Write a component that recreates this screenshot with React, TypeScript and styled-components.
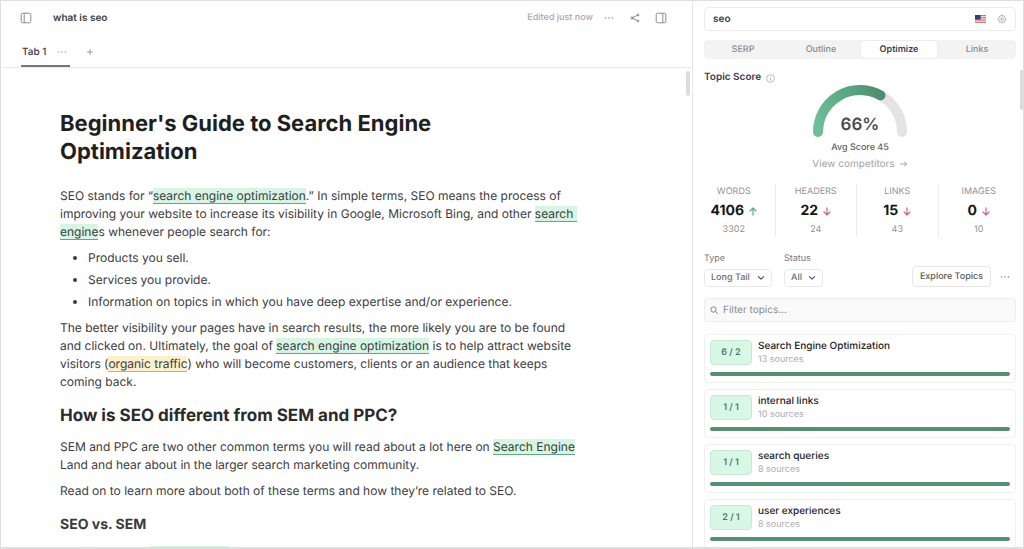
import React from "react";
import styled, { createGlobalStyle } from "styled-components";

const GlobalStyle = createGlobalStyle`
  *, *::before, *::after { box-sizing: border-box; }
  body {
    margin: 0;
    background: #fff;
    color: #3c3c3f;
    font-family: Inter, "Liberation Sans", sans-serif;
    text-rendering: geometricPrecision;
  }
  button, input, select { font-family: inherit; color: inherit; margin: 0; text-rendering: inherit; }
  button { cursor: pointer; }
  h1, h2, h3, p, ul, dl, dd, dt { margin: 0; padding: 0; }
`;

const Shell = styled.div`
  display: grid;
  grid-template-columns: minmax(0, 1fr) 331px;
  height: 100vh;
  border: 1px solid #dfdfdf;
  border-bottom-width: 2px;
  overflow: hidden;
`;

const EditorPane = styled.main`
  position: relative;
  display: flex;
  flex-direction: column;
  min-width: 0;
  min-height: 0;
`;

const Toolbar = styled.header`
  display: flex;
  align-items: center;
  height: 33px;
  padding: 0 25px 0 19px;
`;

const IconButton = styled.button`
  display: inline-flex;
  align-items: center;
  justify-content: center;
  flex: none;
  width: 12px;
  height: 12px;
  padding: 0;
  border: 0;
  background: none;
  color: ${(p) => p.color || "#8c8c8f"};
`;

const DocName = styled.span`
  margin-left: 21px;
  font-size: 10px;
  line-height: 16px;
  font-weight: 600;
`;

const ToolbarEnd = styled.div`
  display: flex;
  align-items: center;
  gap: 14px;
  margin-left: auto;
`;

const Edited = styled.span`
  margin-right: -4px;
  font-size: 9px;
  line-height: 16px;
  font-weight: 500;
  color: #a8a8ab;
`;

const TabRow = styled.nav`
  display: flex;
  align-items: stretch;
  gap: 14px;
  height: 34px;
  padding-left: 20px;
  border-bottom: 1px solid #e9e9ea;
`;

const DocTab = styled.div`
  display: flex;
  align-items: center;
  justify-content: space-between;
  width: 49px;
  padding: 4px 2px 0 1px;
  border-bottom: 2px solid #77777a;
`;

const DocTabButton = styled.button`
  padding: 0;
  border: 0;
  background: none;
  font-size: 10px;
  line-height: 16px;
  font-weight: 500;
`;

const AddTab = styled.div`
  display: flex;
  align-items: center;
  padding-top: 2px;
`;

const Article = styled.article`
  flex: 1;
  min-height: 0;
  overflow: hidden;
  padding: 42px 60px 0 59px;
  white-space: pre-wrap;

  > * { max-width: 520px; }
  > h1 { max-width: 500px; }
`;

const Title = styled.h1`
  font-size: 22px;
  line-height: 28px;
  font-weight: 700;
  color: #1f1f21;
`;

const Section = styled.h2`
  margin-top: 14px;
  font-size: 17px;
  line-height: 22px;
  font-weight: 700;
  color: #2b2b2d;
`;

const SubSection = styled.h3`
  margin-top: 16px;
  font-size: 14px;
  line-height: 18px;
  font-weight: 700;
  color: #3a3a3c;
`;

const Paragraph = styled.p<{ $space?: number }>`
  margin-top: ${(p) => p.$space ?? 8}px;
  font-size: 12px;
  line-height: 18px;
`;

const Bullets = styled.ul`
  margin-top: 8px;
  padding-left: 28px;
  font-size: 12px;
  line-height: 18px;
  white-space: normal;

  li + li { margin-top: 4px; }
`;

const Mark = styled.mark<{ $tone?: "green" | "amber" }>`
  color: inherit;
  background: ${(p) => (p.$tone === "amber" ? "#fdf0cb" : "#d6f5e3")};
  border-bottom: 1px solid ${(p) => (p.$tone === "amber" ? "#e0ab4c" : "#5cab82")};
`;

const ScrollThumb = styled.span<{ $top: number; $height: number; $right: number }>`
  position: absolute;
  top: ${(p) => p.$top}px;
  right: ${(p) => p.$right}px;
  width: 4px;
  height: ${(p) => p.$height}px;
  border-radius: 2px;
  background: #dcdcdd;
`;

const SidePane = styled.aside`
  position: relative;
  display: flex;
  flex-direction: column;
  min-height: 0;
  padding: 6px 7px 0 11px;
  border-left: 1px solid #e6e6e7;
  overflow: hidden;
`;

const QueryBox = styled.div`
  display: flex;
  flex: none;
  align-items: center;
  gap: 10px;
  height: 24px;
  padding: 0 7px 0 8px;
  border: 1px solid #ececed;
  border-radius: 4px;
`;

const QueryInput = styled.input`
  flex: 1;
  min-width: 0;
  padding: 0;
  border: 0;
  outline: 0;
  background: none;
  font-size: 10px;
  line-height: 16px;
  font-weight: 600;
`;

const Segments = styled.div`
  display: grid;
  flex: none;
  grid-template-columns: repeat(4, 1fr);
  height: 19px;
  margin-top: 9px;
  border-radius: 4px;
  background: #f3f3f4;
`;

const Segment = styled.button<{ $active?: boolean }>`
  padding: 0;
  border: ${(p) => (p.$active ? "1px solid #ececed" : "0")};
  border-radius: 4px;
  background: ${(p) => (p.$active ? "#fff" : "none")};
  font-size: 9px;
  line-height: 16px;
  font-weight: ${(p) => (p.$active ? 600 : 500)};
  color: ${(p) => (p.$active ? "#404042" : "#8a8a8e")};
`;

const ScoreHeading = styled.h2`
  display: flex;
  align-items: center;
  gap: 5px;
  height: 16px;
  margin-top: 10px;
  font-size: 10px;
  line-height: 16px;
  font-weight: 600;

  svg { margin-top: 3px; }
`;

const ScoreBlock = styled.div`
  display: flex;
  flex-direction: column;
  align-items: center;
`;

const Gauge = styled.div`
  display: grid;
  justify-items: center;
  align-items: end;

  > * { grid-area: 1 / 1; }
`;

const GaugeValue = styled.strong`
  font-size: 17px;
  line-height: 24px;
  font-weight: 600;
  color: #4c4c4f;
`;

const Average = styled.span`
  margin-top: 3px;
  font-size: 9px;
  line-height: 16px;
  font-weight: 500;
  color: #5e5e61;
`;

const Competitors = styled.a`
  display: inline-flex;
  align-items: center;
  gap: 4px;
  font-size: 10px;
  line-height: 16px;
  color: #a3a3a6;
  text-decoration: none;
`;

const Stats = styled.dl`
  display: grid;
  grid-template-columns: repeat(4, 1fr);
  margin: 12px -3px 0 -11px;
`;

const Stat = styled.div`
  display: flex;
  flex-direction: column;
  align-items: center;
  height: 53px;

  & + & { border-left: 1px solid #ececed; }
`;

const StatLabel = styled.dt`
  font-size: 9px;
  line-height: 16px;
  color: #929295;
`;

const StatValue = styled.dd`
  display: flex;
  align-items: center;
  gap: 5px;
  font-size: 14px;
  line-height: 22px;
  font-weight: 700;
  color: #161618;
`;

const StatTarget = styled.dd`
  font-size: 9px;
  line-height: 16px;
  color: #929295;
`;

const Filters = styled.div`
  display: flex;
  align-items: flex-end;
  gap: 12px;
  margin-top: 14px;
`;

const Field = styled.label`
  display: flex;
  flex-direction: column;
  gap: 2px;
  font-size: 9px;
  line-height: 16px;
  color: #77777a;
`;

const SelectBox = styled.span<{ $width: number }>`
  display: flex;
  align-items: center;
  justify-content: space-between;
  width: ${(p) => p.$width}px;
  height: 18px;
  padding: 0 6px;
  border: 1px solid #e9e9ea;
  border-radius: 4px;
  color: #6d6d70;
`;

const Select = styled.select`
  flex: 1;
  min-width: 0;
  padding: 0;
  border: 0;
  outline: 0;
  appearance: none;
  background: none;
  font-size: 9px;
  line-height: 16px;
  font-weight: 500;
`;

const FilterActions = styled.div`
  display: flex;
  align-items: center;
  gap: 8px;
  margin-left: auto;
  padding-right: 5px;
`;

const ExploreButton = styled.button`
  width: 79px;
  height: 21px;
  padding: 0;
  border: 1px solid #e6e6e7;
  border-radius: 4px;
  background: #fff;
  font-size: 9px;
  line-height: 16px;
  font-weight: 500;
  color: #57575a;
`;

const TopicSearch = styled.label`
  display: flex;
  flex: none;
  align-items: center;
  gap: 5px;
  height: 24px;
  margin-top: 11px;
  padding: 0 5px;
  border: 1px solid #ececed;
  border-radius: 4px;
  background: #fafafa;
  color: #808083;
`;

const TopicInput = styled.input`
  flex: 1;
  min-width: 0;
  padding: 0;
  border: 0;
  outline: 0;
  background: none;
  font-size: 10px;
  line-height: 16px;

  &::placeholder { color: #8a8a8f; opacity: 1; }
`;

const TopicList = styled.ul`
  display: flex;
  flex-direction: column;
  gap: 5px;
  margin-top: 12px;
  list-style: none;
`;

const Topic = styled.li`
  display: grid;
  grid-template-columns: 42px 1fr;
  column-gap: 6px;
  row-gap: 6px;
  padding: 5px 5px 6px;
  border: 1px solid #f0f0f1;
  border-radius: 4px;

  & + & { margin-top: 1px; }
`;

const Count = styled.span`
  display: flex;
  align-items: center;
  justify-content: center;
  height: 25px;
  border: 1px solid #c5ead5;
  border-radius: 4px;
  background: #d9f7e5;
  font-size: 9px;
  font-weight: 600;
  color: #4a7a61;
`;

const TopicText = styled.div`
  display: flex;
  flex-direction: column;
`;

const TopicName = styled.span`
  font-size: 10px;
  line-height: 13px;
  font-weight: 500;
  color: #222224;
`;

const Sources = styled.span`
  font-size: 9px;
  line-height: 13px;
  color: #acacaf;
`;

const Meter = styled.div`
  grid-column: 1 / -1;
  height: 4px;
  border-radius: 2px;
  background: #568f72;
`;

const Dots = () => (
  <svg width="10" height="10" viewBox="0 0 10 10" fill="currentColor">
    <circle cx="1.6" cy="5" r="0.8" />
    <circle cx="5" cy="5" r="0.8" />
    <circle cx="8.4" cy="5" r="0.8" />
  </svg>
);

const PanelIcon = ({ side }: { side: "left" | "right" }) => (
  <svg width="12" height="12" viewBox="0 0 12 12" fill="none" stroke="currentColor">
    <rect x="1.2" y="1.2" width="9.6" height="9.6" rx="1.5" />
    <path d={side === "left" ? "M4.2 1v10" : "M7.8 1v10"} />
  </svg>
);

const ShareIcon = () => (
  <svg width="10" height="10" viewBox="0 0 10 10" fill="none" stroke="currentColor">
    <path d="M7.8 2 2 5l5.8 3" />
    <circle cx="8" cy="2" r="0.9" />
    <circle cx="2" cy="5" r="1.1" />
    <circle cx="8" cy="8" r="0.9" />
  </svg>
);

const PlusIcon = () => (
  <svg width="8" height="8" viewBox="0 0 8 8" stroke="currentColor">
    <path d="M4 1.2v5.6M1.2 4h5.6" />
  </svg>
);

const FlagIcon = () => (
  <svg width="11" height="8" viewBox="0 0 11 8" role="img" aria-label="United States">
    <rect width="11" height="8" rx="0.6" fill="#f3dcdc" />
    <path d="M0 .6h11M0 2.8h11M0 5h11M0 7.3h11" stroke="#cc6a70" strokeWidth="1" />
    <rect width="5.6" height="4.6" fill="#34406e" />
  </svg>
);

const GearIcon = () => (
  <svg width="10" height="10" viewBox="0 0 10 10" fill="none" stroke="currentColor">
    <circle cx="5" cy="5" r="3.5" />
    <circle cx="5" cy="5" r="1.3" />
    <path
      d="M5 .4v1M5 8.6v1M.4 5h1M8.6 5h1M1.7 1.7l.7.7M7.6 7.6l.7.7M1.7 8.3l.7-.7M7.6 2.4l.7-.7"
      strokeWidth="0.8"
    />
  </svg>
);

const InfoIcon = () => (
  <svg width="9" height="9" viewBox="0 0 9 9" fill="none" stroke="#a9a9ac" strokeWidth="0.8">
    <circle cx="4.5" cy="4.5" r="3.9" />
    <path d="M4.5 4.2v2.4M4.5 2.4v.8" />
  </svg>
);

const TrendIcon = ({ up }: { up: boolean }) => (
  <svg
    width="8"
    height="9"
    viewBox="0 0 8 9"
    fill="none"
    stroke={up ? "#58b487" : "#d4677f"}
    strokeWidth="1.2"
    strokeLinecap="round"
    strokeLinejoin="round"
  >
    <path d={up ? "M4 8.2V1M1 4l3-3 3 3" : "M4 .8V8M1 5l3 3 3-3"} />
  </svg>
);

const ArrowRight = () => (
  <svg width="9" height="8" viewBox="0 0 9 8" fill="none" stroke="currentColor">
    <path d="M1 4h6.6M5.2 1.8 7.6 4 5.2 6.2" />
  </svg>
);

const Chevron = () => (
  <svg
    width="8"
    height="6"
    viewBox="0 0 8 6"
    fill="none"
    stroke="#565659"
    strokeWidth="1.2"
    strokeLinecap="round"
    strokeLinejoin="round"
  >
    <path d="m1.4 1.6 2.6 2.6 2.6-2.6" />
  </svg>
);

const SearchIcon = () => (
  <svg width="8" height="8" viewBox="0 0 8 8" fill="none" stroke="currentColor">
    <circle cx="3.5" cy="3.5" r="2.7" />
    <path d="m5.5 5.5 2.1 2.1" />
  </svg>
);

const GaugeArc = () => (
  <svg width="94" height="52" viewBox="0 0 94 52" fill="none" strokeWidth="10" strokeLinecap="round">
    <defs>
      <linearGradient id="score" gradientUnits="userSpaceOnUse" x1="5" y1="40" x2="72" y2="10">
        <stop offset="0" stopColor="#6cbf98" />
        <stop offset="0.6" stopColor="#57a580" />
        <stop offset="1" stopColor="#4c8b6b" />
      </linearGradient>
    </defs>
    <path d="M5 47a42 42 0 0 1 84 0" stroke="#e4e4e6" />
    <path d="M5 47A42 42 0 0 1 67.5 10.4" stroke="url(#score)" />
  </svg>
);

const stats = [
  { label: "WORDS", value: "4106", target: "3302", up: true },
  { label: "HEADERS", value: "22", target: "24", up: false },
  { label: "LINKS", value: "15", target: "43", up: false },
  { label: "IMAGES", value: "0", target: "10", up: false },
];

const topics = [
  { name: "Search Engine Optimization", count: "6 / 2", sources: 13 },
  { name: "internal links", count: "1 / 1", sources: 10 },
  { name: "search queries", count: "1 / 1", sources: 8 },
  { name: "user experiences", count: "2 / 1", sources: 8 },
];

export default function App() {
  return (
    <>
      <GlobalStyle />
      <Shell>
        <EditorPane>
          <Toolbar>
            <IconButton aria-label="Toggle sidebar"><PanelIcon side="left" /></IconButton>
            <DocName>what is seo</DocName>
            <ToolbarEnd>
              <Edited>Edited just now</Edited>
              <IconButton aria-label="More"><Dots /></IconButton>
              <IconButton aria-label="Share"><ShareIcon /></IconButton>
              <IconButton aria-label="Toggle panel"><PanelIcon side="right" /></IconButton>
            </ToolbarEnd>
          </Toolbar>
          <TabRow>
            <DocTab>
              <DocTabButton>Tab 1</DocTabButton>
              <IconButton aria-label="Tab options" color="#a3a3a6"><Dots /></IconButton>
            </DocTab>
            <AddTab>
              <IconButton aria-label="Add tab" color="#98989b"><PlusIcon /></IconButton>
            </AddTab>
          </TabRow>
          <Article>
            <Title>Beginner's Guide to Search Engine Optimization</Title>
            <Paragraph $space={21}>
              SEO stands for “<Mark>search engine optimization</Mark>.” In simple terms, SEO means the process of improving your website to increase its visibility in Google, Microsoft Bing, and other <Mark>search engine</Mark>s whenever people search for:
            </Paragraph>
            <Bullets>
              <li>Products you sell.</li>
              <li>Services you provide.</li>
              <li>Information on topics in which you have deep expertise and/or experience.</li>
            </Bullets>
            <Paragraph>
              The better visibility your pages have in search results, the more likely you are to be found and clicked on. Ultimately, the goal of <Mark>search engine optimization</Mark> is to help attract website visitors (<Mark $tone="amber">organic traffic</Mark>) who will become customers, clients or an audience that keeps coming back.
            </Paragraph>
            <Section>How is SEO different from SEM and PPC?</Section>
            <Paragraph $space={11}>
              SEM and PPC are two other common terms you will read about a lot here on <Mark>Search Engine</Mark> Land and hear about in the larger search marketing community.
            </Paragraph>
            <Paragraph>
              Read on to learn more about both of these terms and how they’re related to SEO.
            </Paragraph>
            <SubSection>SEO vs. SEM</SubSection>
            <Paragraph $space={11}>
              SEM stands for <Mark>search engine</Mark> marketing
            </Paragraph>
          </Article>
          <ScrollThumb $top={70} $height={25} $right={2} />
        </EditorPane>
        <SidePane>
          <QueryBox>
            <QueryInput aria-label="Target query" defaultValue="seo" />
            <FlagIcon />
            <IconButton aria-label="Query settings" color="#b4b4b7"><GearIcon /></IconButton>
          </QueryBox>
          <Segments>
            <Segment>SERP</Segment>
            <Segment>Outline</Segment>
            <Segment $active>Optimize</Segment>
            <Segment>Links</Segment>
          </Segments>
          <ScoreHeading>Topic Score <InfoIcon /></ScoreHeading>
          <ScoreBlock>
            <Gauge>
              <GaugeArc />
              <GaugeValue>66%</GaugeValue>
            </Gauge>
            <Average>Avg Score 45</Average>
            <Competitors href="#">View competitors <ArrowRight /></Competitors>
          </ScoreBlock>
          <Stats>
            {stats.map((s) => (
              <Stat key={s.label}>
                <StatLabel>{s.label}</StatLabel>
                <StatValue>{s.value}<TrendIcon up={s.up} /></StatValue>
                <StatTarget>{s.target}</StatTarget>
              </Stat>
            ))}
          </Stats>
          <Filters>
            <Field>
              Type
              <SelectBox $width={68}>
                <Select><option>Long Tail</option></Select>
                <Chevron />
              </SelectBox>
            </Field>
            <Field>
              Status
              <SelectBox $width={39}>
                <Select><option>All</option></Select>
                <Chevron />
              </SelectBox>
            </Field>
            <FilterActions>
              <ExploreButton>Explore Topics</ExploreButton>
              <IconButton aria-label="More topic actions"><Dots /></IconButton>
            </FilterActions>
          </Filters>
          <TopicSearch>
            <SearchIcon />
            <TopicInput aria-label="Filter topics" placeholder="Filter topics..." />
          </TopicSearch>
          <TopicList>
            {topics.map((t) => (
              <Topic key={t.name}>
                <Count>{t.count}</Count>
                <TopicText>
                  <TopicName>{t.name}</TopicName>
                  <Sources>{t.sources} sources</Sources>
                </TopicText>
                <Meter />
              </Topic>
            ))}
          </TopicList>
          <ScrollThumb $top={69} $height={40} $right={-1} />
        </SidePane>
      </Shell>
    </>
  );
}
